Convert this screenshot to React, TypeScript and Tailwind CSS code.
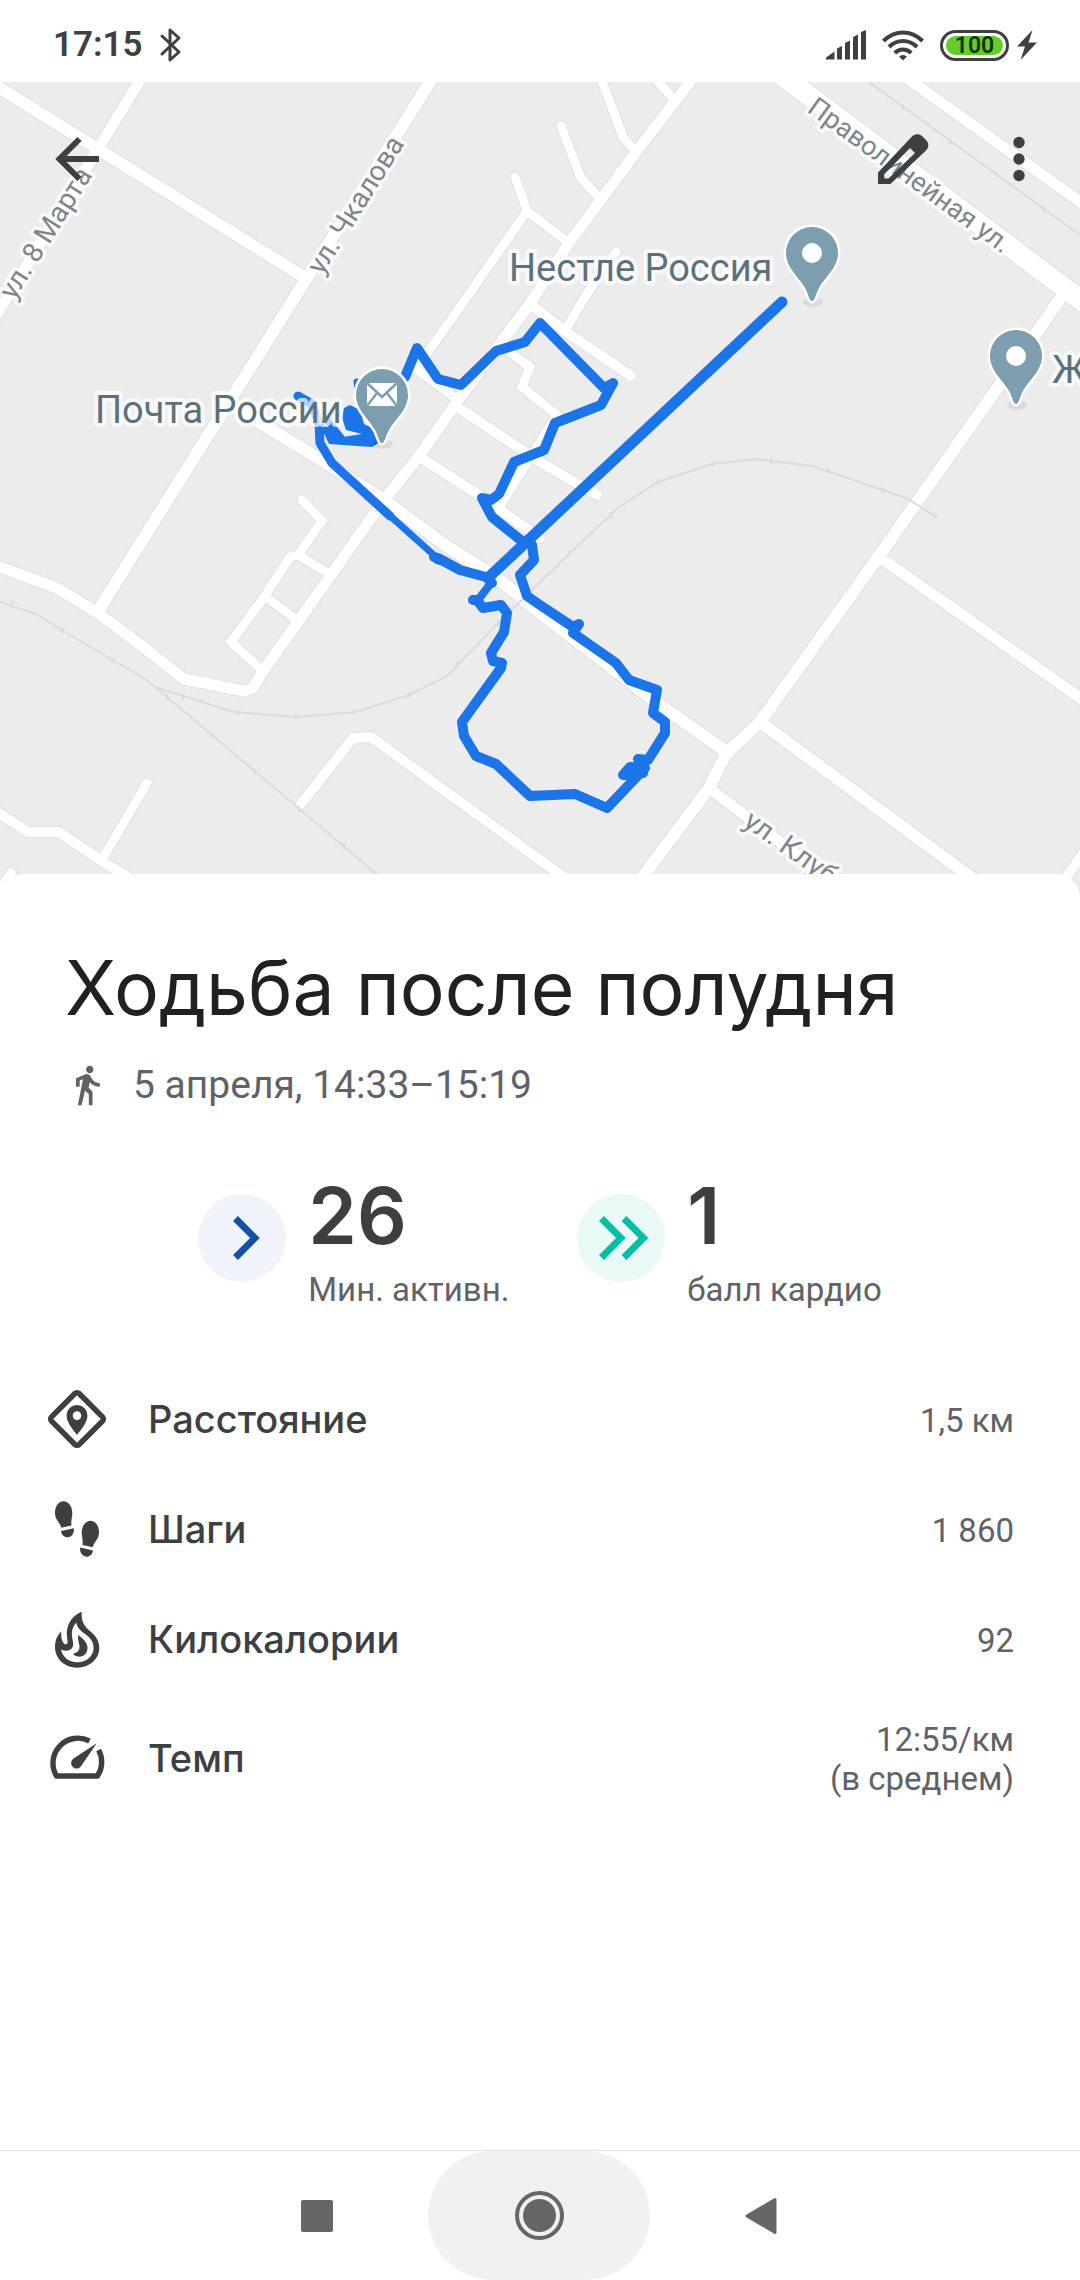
import React from 'react';

const ROADS: { d: string; width: number }[] = [
  { d: 'M-10 82L304 277', width: 12 },
  { d: 'M139 82L-8 322', width: 11 },
  { d: 'M430 82L293 300L98 611', width: 12 },
  { d: 'M-6 565L57 588L98 613L138 643L184 679L244 691L253 688L263 671L384 500L420 455L456 403L529 305L569 243L636 152L690 82', width: 11 },
  { d: 'M601 78L623 137L636 152', width: 9 },
  { d: 'M655 78L674 100', width: 9 },
  { d: 'M561 126L581 178L601 200', width: 9 },
  { d: 'M515 177L527 211L569 243', width: 9 },
  { d: 'M527 211L465 300L416 369L458 400', width: 9 },
  { d: 'M616 252L583 300L566 329', width: 9 },
  { d: 'M529 303L566 332L631 376', width: 10 },
  { d: 'M508 351L530 367L522 387L557 415L500 506', width: 9 },
  { d: 'M456 406L540 462L597 495', width: 10 },
  { d: 'M420 457L482 497L540 538', width: 10 },
  { d: 'M227 403L310 453L384 500L448 547L496 577L540 613L660 705L728 753', width: 12 },
  { d: 'M302 500L322 521L298 555L290 557L262 600L231 642L263 671', width: 9 },
  { d: 'M298 555L331 575', width: 9 },
  { d: 'M266 597L298 621', width: 9 },
  { d: 'M-6 810L28 832L59 832L103 862L150 890', width: 10 },
  { d: 'M147 783L103 858', width: 9 },
  { d: 'M11 873L-12 912', width: 10 },
  { d: 'M301 804L353 738L371 737L540 860L600 903', width: 10 },
  { d: 'M780 74L1090 307', width: 20 },
  { d: 'M904 76L1090 209', width: 11 },
  { d: 'M1065 292L879 556L760 722L726 754L709 788L625 900', width: 12 },
  { d: 'M879 557L941 600L1090 705', width: 11 },
  { d: 'M760 722L1002 900', width: 12 },
  { d: 'M709 788L764 830L850 894', width: 11 },
  { d: 'M1090 844L1050 900', width: 10 },
];

const RAILS = [
  'M0 602L36 614L63 631L145 679L155 687L405 898',
  'M155 687L234 712L296 717L356 712L409 695L447 676L499 622L569 554L619 507L658 482L712 464L757 459L812 466L883 490L908 499L938 518',
  'M869 82L1080 235',
];

const RAIL_TICKS = [
  [12, 604], [63, 631], [112, 660], [167, 697], [211, 735], [255, 772], [299, 809], [344, 846],
  [183, 697], [238, 713], [296, 717], [354, 712], [409, 695], [457, 664], [498, 623],
  [569, 554], [611, 515], [658, 482], [713, 464], [771, 461], [828, 471], [883, 490], [934, 516],
  [903, 107], [950, 141], [997, 175], [1044, 209],
];

const MapPin = ({ x, y, children }: { x: number; y: number; children: React.ReactNode }) => (
  <g transform={`translate(${x} ${y})`}>
    <ellipse cx="1" cy="49" rx="10" ry="5" fill="#000" opacity="0.07" />
    <path
      d="M0 48C-3 48-3 42-7 35C-13 24-26 15-26 0A26 26 0 1 1 26 0C26 15 13 24 7 35C3 42 3 48 0 48Z"
      fill="#7c9eae"
      stroke="#fff"
      strokeWidth="5"
      paintOrder="stroke"
    />
    {children}
  </g>
);

const RouteMap = () => (
  <svg
    viewBox="0 82 1080 816"
    preserveAspectRatio="xMidYMid slice"
    className="block h-full w-full bg-[#ececec] font-[Roboto,sans-serif]"
    role="img"
    aria-label="Карта маршрута"
  >
    <g fill="none" stroke="#dfe0e3">
      {ROADS.map((r) => (
        <path key={r.d} d={r.d} strokeWidth={r.width + 2} strokeLinecap="round" />
      ))}
    </g>
    <g fill="none" stroke="#fff">
      {ROADS.map((r) => (
        <path key={r.d} d={r.d} strokeWidth={r.width} strokeLinecap="round" />
      ))}
    </g>
    <g fill="none" stroke="#dadcdf" strokeWidth="2">
      {RAILS.map((d) => (
        <path key={d} d={d} />
      ))}
      {RAIL_TICKS.map(([x, y]) => (
        <path key={`${x}-${y}`} d={`M${x} ${y - 3}v6`} />
      ))}
    </g>

    {/* recorded track */}
    <g fill="none" stroke="#1b74e8" strokeWidth="10" strokeLinecap="round" strokeLinejoin="round">
      <path d="M405 377L417 348L438 379L461 385L496 351L525 342L540 323L604 388L613 383L601 405L555 423L544 450L514 462L499 494L491 500L482 498L492 517L523 542" />
      <path d="M532 545L534 560L520 575L527 596L540 605L573 627L579 624L573 633L616 663L629 680L657 690L653 713L665 722L665 733L648 760L638 759L643 773L623 775L630 767L645 768L607 808L575 794L530 796L496 764L476 756L464 736L462 722L501 668L502 663L493 661L491 653L504 632L507 613L501 605L483 608L477 600L473 600" />
      <path d="M782 302L489 577" strokeWidth="11" />
      <path d="M478 600L491 583L486 577L460 570L445 562L437 560L434 557" strokeWidth="8" />
      <path d="M492 583L486 577L460 570L438 558L434 557" />
      <path d="M340 471L436 557" strokeWidth="7" />
      <path d="M390 516L332 463L320 443L319 423L312 404L298 396" strokeWidth="9" />
      <path d="M357 382L358 390M327 420L342 439" strokeWidth="7" />
    </g>
    <path
      d="M319 423L328 427L343 437L362 434L346 430L342 418L344 408L350 405L360 410L364 424L370 427L382 441L372 447L329 444Z"
      fill="#1b74e8"
    />

    <MapPin x={812} y={253}>
      <circle r="10" fill="#fff" />
    </MapPin>
    <MapPin x={1016} y={356}>
      <circle r="10" fill="#fff" />
    </MapPin>
    <MapPin x={382} y={395}>
      <rect x="-15" y="-12" width="30" height="23" fill="#fff" />
      <path d="M-15-12L0 2L15-12M-15 11L-5-2M15 11L5-2" fill="none" stroke="#7c9eae" strokeWidth="2.5" />
    </MapPin>

    <g fill="#5b727d" fontSize="38" stroke="#fff" strokeOpacity="0.7" strokeWidth="8" paintOrder="stroke" strokeLinejoin="round">
      <text x="509" y="281">Нестле Россия</text>
      <text x="95" y="423">Почта России</text>
      <text x="1052" y="383">Ж</text>
    </g>
    <g fill="#7e8689" fontSize="28" stroke="#fff" strokeOpacity="0.7" strokeWidth="7" paintOrder="stroke" strokeLinejoin="round">
      <text transform="translate(14 301) rotate(-58)">ул. 8 Марта</text>
      <text transform="translate(322 276) rotate(-58)">ул. Чкалова</text>
      <text transform="translate(806 111) rotate(36)" fontSize="27">Праволинейная ул.</text>
      <text transform="translate(742 825) rotate(35)">ул. Клуб</text>
    </g>
  </svg>
);

const StatusBar = () => (
  <div className="flex h-[82px] items-center justify-between pl-[53px] pr-[43px] pt-2 text-[#404040]">
    <div className="flex items-center gap-4">
      <span className="text-[35px] font-semibold leading-10">17:15</span>
      <svg width="24" height="36" viewBox="0 0 24 36" fill="none" stroke="currentColor" strokeWidth="3" strokeLinejoin="round" strokeLinecap="round" aria-hidden="true">
        <path d="M3 9L20 25L11 33V3L20 11L3 27" />
      </svg>
    </div>
    <div className="flex items-center gap-4">
      <svg width="40" height="30" viewBox="0 0 40 30" fill="currentColor" aria-hidden="true">
        <path d="M0 29.5V27.5L8.5 21.5V29.5ZM11 18.5L16 16V29.5H11ZM19 13L24 10.5V29.5H19ZM27 7L32 4.5V29.5H27ZM35 2L40 0V29.5H35Z" />
      </svg>
      <svg width="42" height="31" viewBox="0 0 42 31" fill="none" stroke="currentColor" strokeWidth="4" aria-hidden="true">
        <path d="M1.4 11C13-.5 29-.5 40.6 11M7 17C15 9 27 9 35 17M12.8 23C17.5 18.3 24.5 18.3 29.2 23" />
        <path d="M21 30.5L17 26.5Q21 23.5 25 26.5Z" fill="currentColor" stroke="none" />
      </svg>
      <div className="flex items-center gap-2">
        <div className="flex h-[31px] w-[69px] rounded-full border-3 border-[#404040] p-[3px]">
          <span className="flex flex-1 items-center justify-center rounded-full bg-[#66cc2c] text-[23px] font-semibold leading-none text-[#12330a]">
            100
          </span>
        </div>
        <svg width="20" height="30" viewBox="0 0 20 30" fill="currentColor" aria-hidden="true">
          <path d="M15.5 0L0 16.5H8L3.5 30L20 12.5H11.5Z" />
        </svg>
      </div>
    </div>
  </div>
);

const MapToolbar = () => (
  <div className="absolute inset-x-0 top-0 flex items-center justify-between px-[44px] pt-11 text-[#3c4043]">
    <button type="button" aria-label="Назад">
      <svg width="66" height="66" viewBox="0 0 66 66" fill="none" stroke="currentColor" strokeWidth="6">
        <path d="M55 33H16M35.5 13L15.5 33L35.5 53" />
      </svg>
    </button>
    <div className="flex gap-[50px]">
      <button type="button" aria-label="Изменить">
        <svg width="66" height="66" viewBox="0 0 66 66" fill="currentColor">
          <path
            fillRule="evenodd"
            d="M8 58V46.5L42 10.5C45 7.5 49 7.5 52 10L56 14C59 17 59 21 56.5 24L20.5 58ZM14 48.5L14.5 52.500H18.500L45 27L40 22Z"
          />
        </svg>
      </button>
      <button type="button" aria-label="Ещё" className="-mr-4">
        <svg width="66" height="66" viewBox="0 0 66 66" fill="currentColor">
          <circle cx="33" cy="16.5" r="5.7" />
          <circle cx="33" cy="33" r="5.7" />
          <circle cx="33" cy="49.5" r="5.7" />
        </svg>
      </button>
    </div>
  </div>
);

const DistanceIcon = () => (
  <svg width="66" height="66" viewBox="0 0 66 66" aria-hidden="true">
    <rect x="13.5" y="13.5" width="39" height="39" rx="3" fill="none" stroke="currentColor" strokeWidth="5.5" transform="rotate(45 33 33)" />
    <path
      fill="currentColor"
      fillRule="evenodd"
      d="M33 49C31 46 22.5 37 22.5 29.5A10.5 10.5 0 0 1 43.5 29.5C43.5 37 35 46 33 49ZM33 25.3A4.3 4.3 0 1 0 33 33.9A4.3 4.3 0 1 0 33 25.3Z"
    />
  </svg>
);

const StepsIcon = () => {
  const sole = (
    <>
      <path d="M19.3 5.3C24.5 5 28.6 11 28.3 18C28 22 26.8 25 27.5 29.5L17.3 31.8C16 26 11 24 11 17C11 10 14.5 5.6 19.3 5.3Z" />
      <path d="M17 35L29.8 32.2C30.5 37 28 40.6 24 41.3C20.5 41.6 17.4 39 17 35Z" />
    </>
  );
  return (
    <svg width="66" height="66" viewBox="0 0 66 66" fill="currentColor" aria-hidden="true">
      {sole}
      <g transform="translate(66 19.4) scale(-1 1)">{sole}</g>
    </svg>
  );
};

const FlameIcon = () => (
  <svg width="66" height="66" viewBox="0 0 66 66" fill="currentColor" fillRule="evenodd" aria-hidden="true">
    <path d="M37.7 5.7C37 15 40 20 46 25C52 30 55.3 35 55.3 42C55.3 53 45.5 61.7 33.2 61.7C20.8 61.7 11 53 11 41C11 34 13.5 29.5 17.3 25C16.8 30 17.5 34 19.5 37C20.8 39.2 24 38.5 23.6 35.5C23 31 22.3 27.5 23.3 22.5C25 14.5 30.5 8.8 37.7 5.7ZM32.3 16.5C28.5 21 27.6 25 28 30C28.3 34.5 30.2 37.5 28.6 41C26.8 44.8 22 46 17 43.5C18.5 51 25 56.3 33.2 56.3C42.3 56.3 49.6 50 49.6 42C49.6 36 46.5 32 41.5 28.3C36.5 24.8 33 21.5 32.3 16.5Z" />
    <path d="M34.3 29C38.5 32.5 43.5 36 43.5 42C43.5 47 40 50.7 35.5 50.7C33 50.7 30.8 49.8 29 48C34 46.5 36.3 43.5 35.3 39C34.7 36 33.5 33 34.3 29Z" />
  </svg>
);

const PaceIcon = () => (
  <svg width="66" height="66" viewBox="0 0 66 66" aria-hidden="true">
    <path
      d="M45.5 16A25 25 0 0 0 12.5 51H53.5A25 25 0 0 0 54.6 25"
      fill="none"
      stroke="currentColor"
      strokeWidth="5.4"
      strokeLinejoin="round"
    />
    <path d="M52.7 18.3L37.5 40.5A5.5 5.5 0 1 1 29.5 33.5Z" fill="currentColor" />
  </svg>
);

const METRICS = [
  { label: 'Расстояние', value: ['1,5 км'], icon: <DistanceIcon />, row: 'h-[110px]' },
  { label: 'Шаги', value: ['1 860'], icon: <StepsIcon />, row: 'h-[110px]' },
  { label: 'Килокалории', value: ['92'], icon: <FlameIcon />, row: 'h-[110px]' },
  { label: 'Темп', value: ['12:55/км', '(в среднем)'], icon: <PaceIcon />, row: 'h-32' },
];

const Stat = ({ value, label, badge, path }: { value: string; label: string; badge: string; path: string }) => (
  <div className="flex gap-[22px]">
    <div className={`mt-[12px] h-[88px] w-[88px] rounded-full ${badge}`}>
      <svg width="88" height="88" viewBox="0 0 88 88" fill="none" stroke="currentColor" strokeWidth="6.8" aria-hidden="true">
        <path d={path} />
      </svg>
    </div>
    <div>
      <div className="font-[Inter,sans-serif] text-[78px] font-semibold leading-[68px] text-[#3c4043]">{value}</div>
      <div className="mt-[20px] text-[33px] leading-[40px] text-[#5f6368]">{label}</div>
    </div>
  </div>
);

const NavBar = () => (
  <nav className="mt-auto flex h-[130px] justify-center border-t border-[#e3e3e3] pr-[2px] text-[#666]">
    <button type="button" aria-label="Недавние" className="flex w-[222px] items-center justify-center">
      <span className="h-8 w-8 rounded-xs bg-current" />
    </button>
    <button type="button" aria-label="Домой" className="flex w-[222px] items-center justify-center rounded-full bg-[#f1f1f1]">
      <span className="flex h-[49px] w-[49px] items-center justify-center rounded-full border-4 border-current">
        <span className="h-[33px] w-[33px] rounded-full bg-current" />
      </span>
    </button>
    <button type="button" aria-label="Назад" className="flex w-[222px] items-center justify-center">
      <svg width="32" height="38" viewBox="0 0 32 38" fill="currentColor" stroke="currentColor" strokeWidth="3" strokeLinejoin="round">
        <path d="M2 19L30 2.5V35.5Z" />
      </svg>
    </button>
  </nav>
);

export default function App() {
  return (
    <div className="flex min-h-screen flex-col bg-white font-[Roboto,sans-serif]">
      <StatusBar />
      <header className="relative h-[816px] overflow-hidden">
        <RouteMap />
        <MapToolbar />
      </header>

      <main className="relative -mt-6 rounded-t-3xl bg-white pb-16">
        <div className="px-[65px] pt-[66px]">
          <h1 className="font-[Inter,sans-serif] text-[75px] leading-[96px] text-[#202124]">Ходьба после полудня</h1>
          <div className="mt-6 flex items-center gap-6 text-[39px] leading-[50px] text-[#5f6368]">
            <svg width="44" height="44" viewBox="0 0 24 24" fill="currentColor" aria-hidden="true">
              <path d="M13.5 5.5c1.1 0 2-.9 2-2s-.9-2-2-2-2 .9-2 2 .9 2 2 2zM9.8 8.900L7 23h2.100l1.800-8 2.100 2v6h2v-7.500l-2.100-2 .6-3C14.800 12 16.800 13 19 13v-2c-1.900 0-3.500-1-4.300-2.400l-1-1.600c-.4-.6-1-1-1.700-1-.3 0-.5.1-.8.1L6 8.300V13h2V9.600l1.800-.7" />
            </svg>
            <span>5 апреля, 14:33–15:19</span>
          </div>
        </div>

        <div className="mt-[72px] flex justify-center gap-[68px]">
          <Stat value="26" label="Мин. активн." badge="bg-[#f0f4fa] text-[#174ea6]" path="M37.5 24.5L57 44L37.5 63.5" />
          <Stat
            value="1"
            label="балл кардио"
            badge="bg-[#e8f9f6] text-[#00bfa5]"
            path="M24.5 24.5L44 44L24.5 63.5M47 24.5L66.5 44L47 63.5"
          />
        </div>

        <dl className="mt-[54px] pl-[44px] pr-[66px]">
          {METRICS.map((m) => (
            <div key={m.label} className={`flex items-center text-[#3c4043] ${m.row}`}>
              {m.icon}
              <dt className="ml-[38px] flex-1 font-[Inter,sans-serif] text-[38px] font-medium leading-[48px]">{m.label}</dt>
              <dd className="pt-[2px] text-right text-[33px] leading-[39px] text-[#5f6368]">
                {m.value.map((line) => (
                  <div key={line}>{line}</div>
                ))}
              </dd>
            </div>
          ))}
        </dl>
      </main>

      <NavBar />
    </div>
  );
}
